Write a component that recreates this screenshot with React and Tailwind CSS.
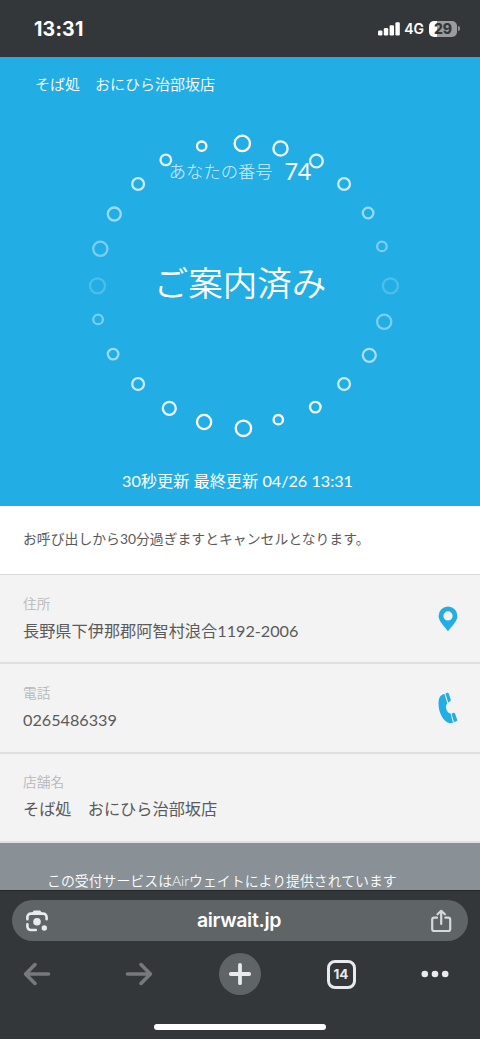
import React from 'react';

// x, y, radius, opacity of every ring in the loader
const dots = [
  [242.3, 143.4, 7.7, 1],
  [280.5, 148.5, 7.1, 0.95],
  [316.4, 161, 6.4, 0.85],
  [344.1, 184, 5.9, 0.75],
  [368.1, 213, 5.3, 0.55],
  [381.9, 246.4, 4.8, 0.4],
  [390.4, 285.8, 7.5, 0.2],
  [384.2, 321.8, 7.1, 0.4],
  [369.3, 355.3, 6.5, 0.6],
  [344.1, 384.1, 5.9, 0.75],
  [315.3, 407.1, 5.3, 0.9],
  [278.3, 419.7, 4.7, 1],
  [243.4, 428.3, 7.7, 1],
  [204.1, 422, 7.1, 1],
  [169.3, 408.3, 6.5, 0.9],
  [138.1, 384.1, 5.9, 0.75],
  [113.1, 354.1, 5.3, 0.55],
  [98.1, 319.4, 4.8, 0.4],
  [97.5, 285.8, 7.5, 0.2],
  [100.3, 248.8, 7.1, 0.4],
  [114.3, 214, 6.5, 0.55],
  [138.1, 184, 5.9, 0.75],
  [165.8, 159.9, 5.3, 0.85],
  [201.7, 146.2, 4.7, 1],
];

function StatusBar() {
  return (
    <header className="h-[57px] shrink-0 bg-[#34373a] flex items-center justify-between pl-[34px] pr-[20px] text-white font-['Inter',sans-serif]">
      <span className="mt-[2px] text-[19.5px] font-bold leading-none tracking-[0.2px]">13:31</span>
      <div className="flex items-center">
        <svg width="22" height="14" viewBox="0 0 22 14" fill="white">
          <rect x="0" y="8.5" width="4.4" height="5" rx="1.2" />
          <rect x="5.8" y="6" width="4.4" height="7.5" rx="1.2" />
          <rect x="11.6" y="3.3" width="4.4" height="10.2" rx="1.2" />
          <rect x="17.4" y="0.3" width="4.4" height="13.2" rx="1.2" />
        </svg>
        <span className="ml-[4.5px] mt-px text-[14px] font-semibold leading-none">4G</span>
        <div className="ml-[5px] w-[28px] h-[16px] rounded-[5px] bg-gradient-to-r from-white from-30% to-[#9a9c9e] to-30% flex items-center justify-center text-[14px] font-extrabold leading-none text-[#34373a]">
          29
        </div>
        <div className="ml-px w-[2px] h-[5px] rounded-r bg-[#909294]" />
      </div>
    </header>
  );
}

function Hero() {
  return (
    <section className="h-[449px] shrink-0 bg-[#22ade5] text-white grid">
      <svg className="col-start-1 row-start-1" width="480" height="449" viewBox="0 57 480 449" fill="none" stroke="white" strokeWidth="2.3">
        {dots.map(([x, y, r, o]) => (
          <circle key={`${x}-${y}`} cx={x} cy={y} r={r} opacity={o} />
        ))}
      </svg>
      <div className="col-start-1 row-start-1 flex flex-col items-center font-light">
        <p className="w-full pl-[35px] pt-[16px] text-[15px] leading-[22px] font-[350]">そば処　おにひら治部坂店</p>
        <p className="mt-[61px] h-[30px] flex items-start">
          <span className="text-[17.3px] leading-[30px] mt-px opacity-80">あなたの番号</span>
          <span className="ml-[12px] text-[23.5px] leading-[30px] font-normal tracking-[-0.3px]">74</span>
        </p>
        <h1 className="mt-[72px] text-[34.5px] leading-[50px] font-[350]">ご案内済み</h1>
        <p className="mt-[161px] ml-[-5px] text-[16.2px] leading-[24px] font-normal">30秒更新 最終更新 04/26 13:31</p>
      </div>
    </section>
  );
}

function InfoRow({ label, value, children }) {
  return (
    <div className="h-[89.3px] shrink-0 border-b-2 border-[#e0e0e0] flex items-center justify-between pl-[23px] pr-[22px]">
      <div>
        <p className="text-[13.7px] leading-[20px] text-[#b8b8b8] font-[350]">{label}</p>
        <p className="mt-[4px] text-[16.2px] leading-[26px] text-[#5a5a5a]">{value}</p>
      </div>
      {children}
    </div>
  );
}

function BrowserBar() {
  return (
    <footer className="h-[149px] shrink-0 bg-[#34373a] border-t border-[#242628] px-[12px] pt-[9px] text-[#e8eaed] font-['Inter',sans-serif]">
      <div className="h-[41px] rounded-full bg-[#5f6467] flex items-center justify-between pl-[13px] pr-[15px]">
        <svg width="24" height="24" viewBox="0 0 24 24" fill="none" stroke="currentColor" strokeWidth="2.6" strokeLinecap="round">
          <path d="M2.4 10.2V8a3.4 3.4 0 0 1 3.4-3.4h12.4A3.4 3.4 0 0 1 21.6 8v2.2M2.4 15.2v2.4A3.4 3.4 0 0 0 5.8 21h5" />
          <path d="M8.500 4l1-1.300h5L15.500 4z" fill="currentColor" />
          <circle cx="12" cy="12.8" r="3.8" fill="currentColor" stroke="none" />
          <circle cx="19.3" cy="19" r="2.7" fill="currentColor" stroke="none" />
        </svg>
        <span className="text-[19.5px] font-semibold leading-none tracking-[-0.3px] text-white">airwait.jp</span>
        <svg width="24" height="24" viewBox="0 0 24 24" fill="none" stroke="#d6d8da" strokeWidth="2.2" strokeLinecap="round" strokeLinejoin="round">
          <path d="M8 8.700H5.200a2 2 0 0 0-2 2V20a2 2 0 0 0 2 2h14a2 2 0 0 0 2-2v-9.300a2 2 0 0 0-2-2H16.400M12.200 15V2M8.500 5.300l3.700-3.500 3.700 3.500" />
        </svg>
      </div>
      <div className="mt-[12px] h-[42px] flex items-center justify-between pl-[11px] pr-[19px]">
        <svg width="28" height="24" viewBox="0 0 28 24" fill="none" stroke="#77797b" strokeWidth="3.6" strokeLinecap="round" strokeLinejoin="round">
          <path d="M25.500 12H2.6M12 2.6L2.6 12l9.4 9.4" />
        </svg>
        <svg className="ml-[13px]" width="28" height="24" viewBox="0 0 28 24" fill="none" stroke="#77797b" strokeWidth="3.6" strokeLinecap="round" strokeLinejoin="round">
          <path d="M2.500 12h22.900M16 2.6l9.4 9.4-9.4 9.4" />
        </svg>
        <div className="ml-[6px] w-[42px] h-[42px] rounded-full bg-[#5f6467] flex items-center justify-center">
          <svg width="24" height="24" viewBox="0 0 24 24" stroke="#e8eaed" strokeWidth="3.8" strokeLinecap="round">
            <path d="M12 2.8v18.4M2.8 12h18.4" />
          </svg>
        </div>
        <div className="ml-[5px] w-[29px] h-[29px] rounded-[8px] border-[3px] border-[#e8eaed] flex items-center justify-center pt-px text-[13.5px] font-bold leading-none">
          14
        </div>
        <svg className="ml-[5px]" width="28" height="8" viewBox="0 0 28 8" fill="#e8eaed">
          <circle cx="3.8" cy="4" r="3.3" />
          <circle cx="14" cy="4" r="3.3" />
          <circle cx="24.2" cy="4" r="3.3" />
        </svg>
      </div>
      <div className="mx-auto mt-[29px] w-[172px] h-[6px] rounded-full bg-white" />
    </footer>
  );
}

export default function App() {
  return (
    <div className="w-[480px] h-[1039px] overflow-hidden flex flex-col bg-[#f3f3f3] whitespace-nowrap font-['Lato','Noto_Sans_CJK_JP',sans-serif]">
      <StatusBar />
      <Hero />
      <p className="h-[69px] shrink-0 bg-white border-b border-[#d9d9d9] pl-[23px] pt-[22px] text-[13.85px] leading-[22px] text-[#5a5a5a]">
        お呼び出しから30分過ぎますとキャンセルとなります。
      </p>
      <InfoRow label="住所" value="長野県下伊那郡阿智村浪合1192-2006">
        <svg width="20" height="26" viewBox="0 0 20 26" fill="#22ade5">
          <path fillRule="evenodd" d="M10 .5A9.4 9.4 0 0 0 .6 9.9C.6 15.500 6.500 20 10 25.200 13.500 20 19.400 15.500 19.400 9.900A9.4 9.4 0 0 0 10 .5zM10 5.300a4.600 4.600 0 1 1 0 9.200 4.600 4.600 0 0 1 0-9.200z" />
        </svg>
      </InfoRow>
      <InfoRow label="電話" value="0265486339">
        <svg width="20" height="32" viewBox="0 0 20 32" fill="#22ade5">
          <path d="M6.500 2C2.500 2.700.500 5.500.500 11.500c0 9.500 5 18.500 11.500 19.800l3-.3-2.400-9.400C9.500 21.500 6 14.500 9.300 11.200z" />
          <path d="M7.400 1.600l1.900-.8c.6-.2 1.200 0 1.400.7l2.100 6.300c.1.600-.1 1.100-.6 1.400l-2 1.300zM13.500 21.700l2.100-1c.6-.2 1.100.1 1.300.6l2.300 6.500c.2.600 0 1-.5 1.200l-2.700 1.200z" />
        </svg>
      </InfoRow>
      <InfoRow label="店舗名" value="そば処　おにひら治部坂店" />
      <div className="flex-1 min-h-0 bg-[#899096] pl-[47px] pt-[27px] text-[13.9px] leading-[22px] text-white font-[350]">
        この受付サービスはAirウェイトにより提供されています
      </div>
      <BrowserBar />
    </div>
  );
}
